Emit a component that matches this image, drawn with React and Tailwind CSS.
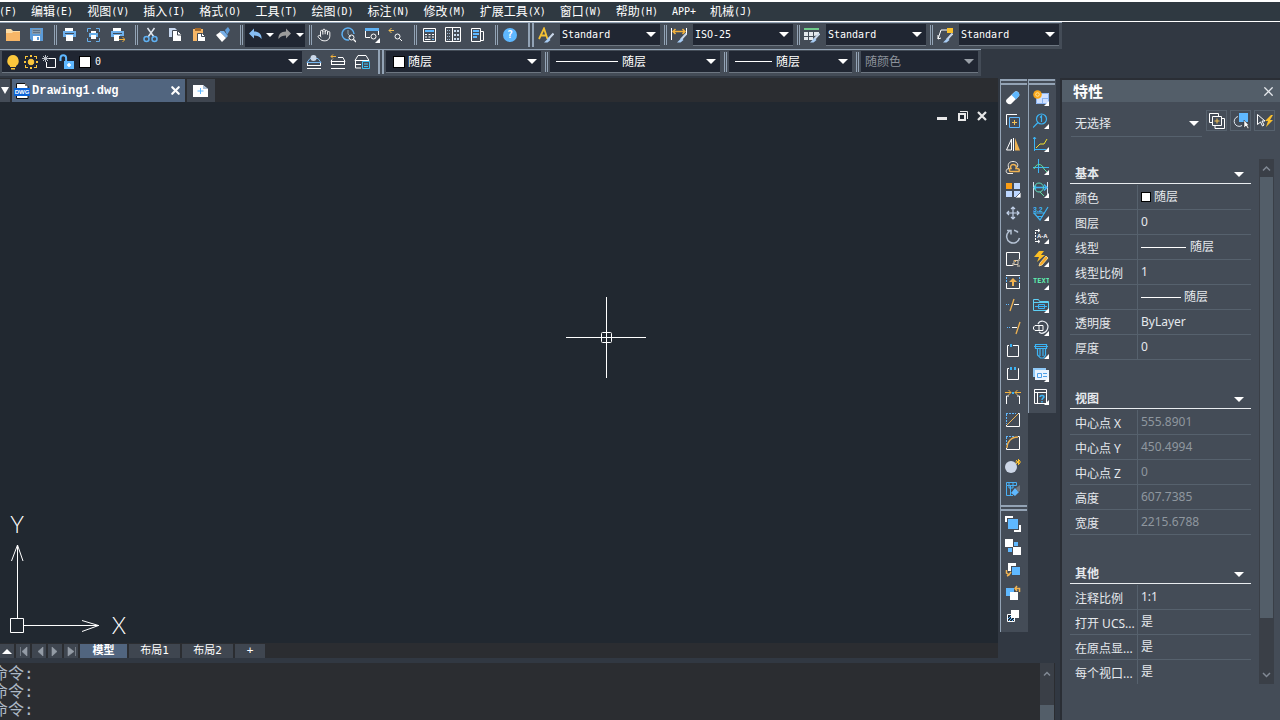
import React from 'react'
import { Hand, X } from 'lucide-react'

const Icon = ({ children }) => (
  <svg width="16" height="16" viewBox="0 0 16 16" fill="none" className="shrink-0">{children}</svg>
)

const Flyout = () => <path d="M16 11v5h-5z" fill="#fff" />

const Lens = () => (
  <>
    <circle cx="10.5" cy="10.5" r="2.5" stroke="#fff" />
    <path d="M12.5 12.5L15 15" stroke="#fff" strokeWidth="1.3" />
  </>
)

const Pen = () => (
  <>
    <path d="M15.500 6.500L10 12.500" stroke="#c9d6e8" strokeWidth="2" />
    <path d="M10.500 11l2 2-3 2.500H6z" fill="#a9cdf5" />
  </>
)

const Caret = ({ dim }) => (
  <svg width="10" height="5" viewBox="0 0 10 5" className="shrink-0 pointer-events-none">
    <path d="M0 0h10L5 5z" fill={dim ? '#9aa0a8' : '#fff'} />
  </svg>
)

const icons = {
  open: (
    <>
      <path d="M2 2h5l2 2h7v10H2z" fill="#fcdca6" />
      <path d="M2 6h6l1-1h7v9H2z" fill="#f7b667" />
    </>
  ),
  save: (
    <>
      <path d="M2 1h13v13H4l-2-2z" fill="#5c9bd8" />
      <path d="M4 2h9v5H4z" fill="#8499ab" />
      <path d="M5 3.500h7M5 5.500h7" stroke="#5d7287" />
      <path d="M5 9h7v5H5z" fill="#fff" />
      <path d="M9 10h2v3H9z" fill="#5c9bd8" />
    </>
  ),
  print: (
    <>
      <path d="M4 1h8v4H4z" fill="#fff" />
      <path d="M2 4h13v6H2z" fill="#6eb0ec" />
      <path d="M4 6.500h9" stroke="#3f4a58" />
      <path d="M5 8h7v6H5z" fill="#fff" />
    </>
  ),
  preview: (
    <>
      <path d="M2.500 5V1.500H6M11 1.500h3.500V5M14.500 11v3.500H11M6 14.500H2.500V11" stroke="#67aeea" />
      <path d="M6 4h5v2H6z" fill="#fff" />
      <path d="M4 6h9v4H4z" fill="#67aeea" />
      <path d="M6 8h5v4H6z" fill="#fff" />
    </>
  ),
  plot: (
    <>
      <path d="M4 1h8v4H4z" fill="#fff" />
      <path d="M2 4h13v6H2z" fill="#6eb0ec" />
      <path d="M4 6.500h9" stroke="#3f4a58" />
      <path d="M5 8h6v6H5z" fill="#fff" />
      <path d="M10 9h6v6h-6z" fill="#424a55" />
      <path d="M10 12.500h6M13.500 10l2.500 2.500-2.500 2.500" stroke="#f3b23d" />
    </>
  ),
  cut: (
    <>
      <path d="M5.500 1L12 10M12.500 1L6 10" stroke="#dfe6ee" strokeWidth="1.500" />
      <circle cx="4.500" cy="12" r="2.500" stroke="#5fb1f3" strokeWidth="1.500" />
      <circle cx="12.500" cy="12" r="2.500" stroke="#5fb1f3" strokeWidth="1.500" />
    </>
  ),
  copy: (
    <>
      <path d="M3 1h6l2 2v7H3z" fill="#c7d7ef" />
      <path d="M6.500 3.500h5l4 4v7h-9z" fill="#fff" stroke="#424a55" />
      <path d="M11.500 4v4h4" stroke="#424a55" />
    </>
  ),
  paste: (
    <>
      <path d="M3 2h10v12H3z" fill="#f6b666" />
      <path d="M5 1h6v3H5z" fill="#a56a2c" />
      <path d="M7.500 6.500h5l3 3v5h-8z" fill="#fff" stroke="#424a55" />
      <path d="M11.500 6v3.500H15" stroke="#424a55" />
    </>
  ),
  brush: (
    <>
      <path d="M11 3l3-3 2 3-3 5z" fill="#5e9cd9" />
      <path d="M6 4h4l4 5-2 2-6-6z" fill="#78b0e8" />
      <path d="M2 8l4-3 6 6-4 4z" fill="#fff" />
    </>
  ),
  undo: <path d="M2 6.500l5-5v3c5 0 8 3 7.500 7.500C12.500 9 10 8.500 7 8.500v3z" fill="#86bdf3" />,
  redo: <path d="M14 6.500l-5-5v3c-5 0-8 3-7.500 7.500C3.500 9 6 8.500 9 8.500v3z" fill="#9b9b9b" />,
  pan: <Hand x="1" y="1" width="14" height="14" color="#fff" strokeWidth={1.600} />,
  zoomRealtime: (
    <>
      <path d="M9 13A6 6 0 1 1 14 7" stroke="#5fb1f3" strokeWidth="1.500" />
      <path d="M8 3v4l3 3" stroke="#8fa4b0" />
      <circle cx="11.500" cy="10.500" r="2.500" stroke="#fff" />
      <path d="M13.500 12.500L16 15" stroke="#fff" strokeWidth="1.300" />
    </>
  ),
  zoomWindow: (
    <>
      <path d="M1 2.500h14" stroke="#5fb1f3" strokeWidth="3" />
      <path d="M1.500 4v6.500H6M14.500 4v4" stroke="#fff" />
      <circle cx="9.500" cy="9.500" r="2.500" stroke="#fff" />
      <Flyout />
    </>
  ),
  zoomPrev: (
    <>
      <path d="M1 3.500h5M3.500 1L1 3.500 3.500 6" stroke="#f3c155" />
      <circle cx="9.500" cy="9.500" r="2.500" stroke="#fff" />
      <path d="M11.500 11.500L14 14" stroke="#fff" />
    </>
  ),
  calc: (
    <>
      <path d="M2.500 1.500h12v13h-12z" stroke="#fff" />
      <path d="M4 4h9" stroke="#5fb8ff" strokeWidth="2" />
      <path d="M4 7.500h2m1.500 0h2m1.500 0h2M4 10h2m1.500 0h2m1.500 0h2M4 12.500h5.500" stroke="#fff" />
      <path d="M11 12.500h2" stroke="#5fb8ff" />
    </>
  ),
  designCenter: (
    <>
      <path d="M.5.5h15v14H.5zM7.500.5v14" stroke="#fff" />
      <path d="M2 3.500h4M2 6.500h4M2 9.500h4M2 12.500h4" stroke="#9db8cf" strokeDasharray="1 1" />
      <path d="M9 3h2v2H9zm3 0h2v2h-2zM9 7h2v2H9zm3 0h2v2h-2zM9 11h2v2H9zm3 0h2v2h-2z" fill="#c8dbef" />
    </>
  ),
  palette: (
    <>
      <path d="M2.500 1.500h9v13h-9zM11.500 4.500h3v9h-3" stroke="#fff" />
      <path d="M4 4h6M4 7h6M4 10h4" stroke="#5fb8ff" strokeWidth="2" />
    </>
  ),
  textStyle: (
    <>
      <path d="M1 12L6 1.500 9.500 12M3 8.500h5.500" stroke="#f5c033" strokeWidth="1.800" />
      <Pen />
    </>
  ),
  dimStyle: (
    <>
      <path d="M.5 1v12M15.500 1v7" stroke="#fff" />
      <path d="M2 4.500h12M4.500 2L2 4.500 4.500 7M11.500 2L14 4.500 11.500 7" stroke="#f3b23d" strokeWidth="1.500" />
      <Pen />
    </>
  ),
  tableStyle: (
    <>
      <path d="M0 1h15v2H0z" fill="#6fca8a" />
      <path d="M0 5h4v4H0zm5 0h4v4H5zm5 0h5v3l-5 1zM0 10h4v3H0zm5 0h4v3H5z" fill="#e3e7ec" />
      <Pen />
    </>
  ),
  leaderStyle: (
    <>
      <path d="M1 12L4 3h6M1 8v4l3-1" stroke="#fff" />
      <path d="M10 1h6v5h-6z" fill="#f8bf2c" />
      <Pen />
    </>
  ),
  bulb: <path d="M8 1a6 6 0 0 1 3 11v1H5v-1A6 6 0 0 1 8 1zM6 14h4v1.500H6z" fill="#fbc73c" />,
  sun: (
    <>
      <circle cx="8" cy="8" r="2.800" fill="#fbc73c" stroke="#fbc73c" />
      <path d="M2 2h3v1H3v2H2zM11 2h3v3h-1V3h-2zM2 11h1v2h2v1H2zM13 11h1v3h-3v-1h2zM7 1h2v2H7zm0 12h2v2H7zM1 7h2v2H1zm12 0h2v2h-2z" fill="#fbc73c" />
    </>
  ),
  freeze: (
    <>
      <path d="M8 4.500h6.500v9h-9V8" stroke="#fff" />
      <path d="M4.500 1v7M1 4.500h7M2 2l5 5M7 2L2 7" stroke="#b9bec5" />
    </>
  ),
  unlock: (
    <>
      <path d="M1.500 7V4a2.800 2.800 0 0 1 5.600 0v5" stroke="#5fb8ff" strokeWidth="2" />
      <path d="M5 7h10v8H5z" fill="#5fb8ff" />
      <path d="M10 9v4M8 11h4" stroke="#fff" strokeWidth="1.500" />
    </>
  ),
  layerManager: (
    <>
      <path d="M4 4.500L1 8.500h14l-3-4z" stroke="#78b8f0" />
      <path d="M1 11.500h14M1 14.500h14M1.500 9v3M14.500 9v3" stroke="#fff" />
      <circle cx="7.500" cy="4" r="3" fill="#ccd8e8" />
    </>
  ),
  layerPrev: (
    <>
      <path d="M8 3.500h5l2 4H1l1-2M1 10.500h14M1 14.500h14M14.500 8v3M1.500 8v3" stroke="#fff" />
      <path d="M1 2.500h5M3 .5L1 2.500l2 2" stroke="#f3b23d" />
    </>
  ),
  layerState: (
    <>
      <path d="M4 1.500h8l3 5H1zM1.500 7v7H7M1 10.500h6" stroke="#fff" />
      <path d="M8.500 7.500h7v7h-7zM10 10h4M10 12.500h4" stroke="#3ec1f5" />
    </>
  ),
  dwg: (
    <>
      <path d="M2.500.5H11l3 3v12H2.500z" fill="#fff" stroke="#111" />
      <path d="M11 0v3h3" fill="#777" />
      <path d="M0 5h16v8H0z" fill="#0b63d6" />
    </>
  ),
  newTab: (
    <>
      <path d="M1 2h10l5 4v8H1z" fill="#fff" />
      <path d="M11 2v4h5" fill="#a8bed6" />
      <path d="M8.500 5v6M5.500 8h6" stroke="#5fb8ff" />
    </>
  ),
  erase: (
    <>
      <path d="M2 9L9.500 2Q11 .5 13 2q2 2 1 4l-8 8q-2 1-4-1t0-4z" fill="#fff" />
      <path d="M6.500 5L9.500 2Q11 .5 13 2q2 2 1 4l-3 3.500z" fill="#5fb8ff" />
    </>
  ),
  offsetCopy: (
    <>
      <path d="M1.500 12V1.500H12" stroke="#fff" />
      <path d="M4.500 4.500h10v10h-10z" stroke="#5fb8ff" />
      <path d="M9.500 7v5M7 9.500h5" stroke="#f3c155" />
    </>
  ),
  mirror: (
    <>
      <path d="M6.500 3v11h-5z" stroke="#fff" />
      <path d="M8.500 2v13" stroke="#fff" />
      <path d="M10 2l5 12.500h-5z" fill="#f0b352" />
    </>
  ),
  offset: (
    <>
      <path d="M8 14.500H3c-3-1-2-5 1-5-2-4 0-7 4-7s6 3 4 6" stroke="#f1ece4" />
      <path d="M5 12.500h9c1-3-1-3-3-3 1-3-1-4-3-4s-3 2-2 4c-2 0-2 1-1 3z" stroke="#f0b352" strokeWidth="1.500" />
    </>
  ),
  array: (
    <>
      <path d="M1 1h6v6H1z" fill="#f99d16" />
      <path d="M9 1h6v6H9zM1 9h6v6H1zM9 9h6v6H9z" fill="#bdd7ff" />
      <path d="M16 10v6h-6z" fill="#fff" stroke="#424a55" strokeWidth=".8" />
    </>
  ),
  move: <path d="M8 2v12M2 8h12M6 4l2-2 2 2M6 12l2 2 2-2M4 6L2 8l2 2M12 6l2 2-2 2" stroke="#c3d2ea" strokeWidth="1.200" />,
  rotate: (
    <path d="M5 2.500L3.500 4a6.500 6.500 0 1 0 11 6M2 2.500h4v4M9 2.200a6.500 6.500 0 0 1 4 2.300" stroke="#b5c2d4" strokeWidth="1.500" />
  ),
  scale: (
    <>
      <path d="M14.500 8V1.500h-13v13H8" stroke="#fff" />
      <path d="M9 9.500h4v4H9zM14 8v2M8 12v3M12 15h3" stroke="#d8cdbb" />
      <path d="M9 9l2 2" stroke="#f0b352" />
    </>
  ),
  stretch: (
    <>
      <path d="M1.500 9v5.500h13V9M1 1.500h14" stroke="#fff" />
      <path d="M1.500 3v5M14.500 3v5" stroke="#5fb8ff" strokeDasharray="2 1" />
      <path d="M8 4l4 4H9v4H7V8H4z" fill="#f0b352" />
    </>
  ),
  trim: (
    <>
      <path d="M5 14L9 2" stroke="#f0b352" strokeWidth="1.300" />
      <path d="M9 7.500h5" stroke="#fff" />
      <path d="M1 7.500h4" stroke="#5fb8ff" strokeDasharray="1 1" />
    </>
  ),
  extend: (
    <>
      <path d="M11 14l4-12" stroke="#f0b352" strokeWidth="1.300" />
      <path d="M7 7.500h5" stroke="#fff" />
      <path d="M2 7.500h4" stroke="#5fb8ff" strokeDasharray="1 1" />
    </>
  ),
  breakPoint: (
    <>
      <path d="M4 2.500H2.500v11h11v-11H8" stroke="#fff" />
      <path d="M5 1h2v3H5z" fill="#3cb4f5" />
    </>
  ),
  breakAt: (
    <>
      <path d="M4 2.500H2.500v11h11v-11H13" stroke="#fff" />
      <path d="M5 1h2v3H5zM9 1h2v3H9z" fill="#3cb4f5" />
    </>
  ),
  join: (
    <>
      <path d="M1.500 15V7H4M14.500 15V7H12" stroke="#fff" />
      <path d="M0 3.500h6M3.500 1L6 3.500 3.500 6M16 3.500h-6M12.500 1L10 3.500 12.500 6" stroke="#f3b23d" />
      <path d="M7 3h2v2H7z" fill="#3cb4f5" />
    </>
  ),
  chamfer: (
    <>
      <path d="M1.500 13v1.500h13v-13H13" stroke="#fff" />
      <path d="M1 1.500h10M1.500 2v10" stroke="#5fb8ff" strokeDasharray="2 1" />
      <path d="M2 13L13 2" stroke="#f0b352" />
    </>
  ),
  fillet: (
    <>
      <path d="M1.500 13v1.500h13v-13H13" stroke="#fff" />
      <path d="M1 1.500h8M1.500 2v8" stroke="#5fb8ff" strokeDasharray="2 1" />
      <path d="M2 13C2 7 6 2 13 2" stroke="#f0b352" strokeWidth="1.300" />
    </>
  ),
  blend: (
    <>
      <circle cx="6" cy="9" r="6" fill="#ccd6e6" />
      <path d="M13.500 1v6M10.500 4h6M11 2l4 4M15 2l-4 4" stroke="#fbc02d" />
    </>
  ),
  explode: (
    <>
      <path d="M1.500 1.500h10v3h-10zM1.500 4.500v10h4v-10M4 2v5h4V2M5 14.500h3" stroke="#49b0f5" />
      <path d="M10 7l4 4-4 4-4-3z" fill="#5fb8ff" />
      <path d="M11 7l4-3v6l-2 1z" fill="#73787f" />
    </>
  ),
  bringFront: (
    <>
      <path d="M1 6V1h7M15 9v6H9" stroke="#fff" strokeWidth="2" />
      <path d="M3 3h10v10H3z" fill="#5fb8ff" />
    </>
  ),
  sendBack: (
    <>
      <path d="M0 0h8v8H0zM8 8h8v8H8z" fill="#fff" />
      <path d="M9 3h4v4H9zM3 9h4v4H3z" fill="#5fb8ff" />
    </>
  ),
  above: (
    <>
      <path d="M3 1h8v8H3z" fill="#fff" />
      <path d="M6 4h10v10H6z" fill="#424a55" />
      <path d="M7 5h8v8H7z" fill="#5fb8ff" />
      <path d="M1.500 8v3l3 2M6 10l-2 3-2 1" stroke="#f0b352" strokeWidth="1.500" />
    </>
  ),
  under: (
    <>
      <path d="M1 3h8v8H1z" fill="#5fb8ff" />
      <path d="M5 7h8v8H5z" fill="#fff" />
      <path d="M14.500 7V3.500H10M12 1l-2 2.500L12 6" stroke="#f0b352" strokeWidth="1.500" />
    </>
  ),
  hatchBack: (
    <>
      <path d="M2.500 6.500h7v7h-7z" fill="#1f2630" stroke="#fff" />
      <path d="M3 11l4-4M4 13l5-5M7 13l2-2" stroke="#5fb8ff" />
      <path d="M6 2h8v8H6z" fill="#fff" />
    </>
  ),
  insertView: (
    <>
      <path d="M3 3h13v11H3z" fill="#cfe0ff" />
      <path d="M3.500 3.500h12v10h-12z" stroke="#8ab4f2" />
      <path d="M9 8.500h6M9.500 8v5" stroke="#8ab4f2" />
      <circle cx="4.500" cy="4.500" r="4.300" fill="#f9a61b" />
      <circle cx="4.500" cy="4.500" r="1.800" stroke="#ffe59a" />
      <Flyout />
    </>
  ),
  balloon: (
    <>
      <circle cx="8.500" cy="6" r="5" stroke="#3cb4f5" strokeWidth="1.200" />
      <path d="M5 9.500L0 14.500M7 4.500L8.500 3v6" stroke="#3cb4f5" strokeWidth="1.200" />
      <Flyout />
    </>
  ),
  graph: (
    <>
      <path d="M1.500 1v14M1 13.500h12M0 3l1.500-2L3 3" stroke="#3cb4f5" />
      <path d="M3 12l4-4h4l3-5" stroke="#f3e12d" />
      <Flyout />
    </>
  ),
  centerLine: (
    <>
      <path d="M5.500 0v14M0 8.500h16" stroke="#3cb4f5" />
      <path d="M1 10c2-6 8-6 10 0l3 3" stroke="#5fe0a0" />
      <Flyout />
    </>
  ),
  dimension: (
    <>
      <path d="M.5 0v16M14.500 0v14" stroke="#d6e2ee" />
      <path d="M1 5.500h13M3 3.500l-2 2 2 2M11 2.500l3 3-3 3" stroke="#3cb4f5" strokeWidth="1.300" />
      <circle cx="6" cy="5.500" r="4.500" stroke="#5fe0c0" />
      <path d="M7 10l4 4" stroke="#5fe0a0" />
      <Flyout />
    </>
  ),
  roughness: (
    <>
      <path d="M0 8h12M1 8l6 7 8-13M4 11.500h6" stroke="#3cb4f5" strokeWidth="1.200" />
      <text x="0" y="6.500" fontSize="7" fontWeight="bold" fill="#3cb4f5" fontFamily="Liberation Sans">3.2</text>
      <Flyout />
    </>
  ),
  section: (
    <>
      <path d="M2.500 4v9" stroke="#fff" strokeDasharray="2 1" />
      <path d="M2 2.500h4M2 13.500h4M5 1l2 1.500L5 4M5 12l2 1.500L5 15" stroke="#fff" />
      <text x="4" y="10" fontSize="6" fontWeight="bold" fill="#fff" fontFamily="Liberation Sans">A-A</text>
      <Flyout />
    </>
  ),
  power: (
    <>
      <path d="M6 0h5L8 4h4l-8 7 2-5H1z" fill="#fbbf24" />
      <path d="M13 5l2 2-6 7-3 1 1-3z" fill="#f6a821" stroke="#ffe3a0" strokeWidth=".8" />
      <Flyout />
    </>
  ),
  text: (
    <>
      <text x="0" y="9" fontSize="7" fontWeight="bold" fill="#5ff0b0" fontFamily="DejaVu Sans Mono">TEXT</text>
      <Flyout />
    </>
  ),
  library: (
    <>
      <path d="M.5 13.500v-11h5l1 2h9v9z" stroke="#5fd0f5" />
      <path d="M1 5.500h14" stroke="#5fd0f5" />
      <path d="M2 9.500h12M5.500 7.500h6v4h-6z" stroke="#3cb4f5" />
      <Flyout />
    </>
  ),
  bolt: (
    <>
      <path d="M2 5.500h8v5H2L.5 9V7zM6 5.500v5" stroke="#fff" />
      <path d="M5 4c2-4 8-4 10 2 0 6-6 9-9 6" stroke="#e9edf2" strokeWidth="1.200" />
      <Flyout />
    </>
  ),
  screw: (
    <>
      <path d="M2.500 1.500h11v4h-11zM4.500 6v6l3 3h3l2-3V6M7 6v7M10 6v7M1 3.500h14" stroke="#3cb4f5" strokeWidth="1.200" />
      <Flyout />
    </>
  ),
  cards: (
    <>
      <path d="M0 2h13v9H0z" fill="#8fc9f7" />
      <path d="M2 4h14v10H2z" fill="#e8f3ff" />
      <path d="M4.500 7.500h4v4h-4zM10 7.500h4M10 10.500h4" stroke="#4c9fe8" />
      <Flyout />
    </>
  ),
  help: (
    <>
      <path d="M1.500.5h12v14h-12zM1.500 3.500h12M4.500 3.500v11" stroke="#fff" />
      <path d="M7 8c0-2 4-2 4 0 0 1-2 1-2 3M9 12v1.500" stroke="#3cb4f5" strokeWidth="1.500" />
      <Flyout />
    </>
  ),
  pickAdd: (
    <>
      <path d="M3 9.500H.5v-9h9V3M13 5.500h2.500v10H6V13" stroke="#fff" />
      <path d="M3.500 3.500h9v9h-9z" stroke="#fff" />
      <path d="M8 5.500v5M5.500 8h5" stroke="#f3c155" />
    </>
  ),
  selectObjects: (
    <>
      <path d="M5 3.500a5 5 0 1 0 4 9" stroke="#dfe6ee" />
      <path d="M6 0h9v9H6z" fill="#5fb8ff" />
      <path d="M11 7v8l2-2 2 3 1-1-1.500-2.500H16z" fill="#fff" stroke="#222" strokeWidth=".5" />
    </>
  ),
  quickSelect: (
    <>
      <path d="M.5 1.500v10l3-2.500 2 4 1.500-1-2-4H8z" stroke="#fff" />
      <path d="M14 2L8 8h3l-2 6 7-7h-3l3-5z" fill="#fbc02d" />
    </>
  ),
}

const menus = [
  ['', '(F)'], ['编辑', '(E)'], ['视图', '(V)'], ['插入', '(I)'], ['格式', '(O)'], ['工具', '(T)'],
  ['绘图', '(D)'], ['标注', '(N)'], ['修改', '(M)'], ['扩展工具', '(X)'], ['窗口', '(W)'], ['帮助', '(H)'],
  ['', 'APP+'], ['机械', '(J)'],
]

const modifyTools = ['erase', 'offsetCopy', 'mirror', 'offset', 'array', 'move', 'rotate', 'scale', 'stretch', 'trim', 'extend',
  'breakPoint', 'breakAt', 'join', 'chamfer', 'fillet', 'blend', 'explode']
const orderTools = ['bringFront', 'sendBack', 'above', 'under', 'hatchBack']
const mechTools = ['insertView', 'balloon', 'graph', 'centerLine', 'dimension', 'roughness', 'section', 'power', 'text',
  'library', 'bolt', 'screw', 'cards', 'help']

const ToolButton = ({ name }) => (
  <button aria-label={name} className="w-6 h-[23px] shrink-0 flex items-center justify-center hover:bg-[#56606c]">
    <Icon>{icons[name]}</Icon>
  </button>
)

const Sep = ({ tight }) => (
  <div className={`${tight ? 'ml-1' : 'ml-1.5'} w-[3px] h-5 shrink-0 border-x border-[#93a3b5]`}></div>
)

const HeavySep = ({ tight }) => (
  <div className={`${tight ? 'ml-1' : 'ml-1.5'} w-1.5 h-6 shrink-0 border-x-2 border-[#93a3b5]`}></div>
)

const Combo = ({ label, value, width, children, mono, disabled, pad = 'pl-0.5' }) => (
  <div className={`${width} ${pad} ml-0.5 pr-1 h-[22px] shrink-0 flex items-center bg-[#202632] border-b border-[#6d7681]`}>
    {children}
    <select
      aria-label={label}
      disabled={disabled}
      className={`flex-1 min-w-0 appearance-none bg-transparent outline-none ${mono ? 'text-[10px]' : 'text-xs'} ${disabled ? 'text-[#8d939c]' : 'text-white'}`}
    >
      <option>{value}</option>
    </select>
    <Caret dim={disabled} />
  </div>
)

const ToolColumn = ({ tools }) => (
  <div className="w-7 pb-[5px] bg-[#444c57] border-l border-[#93a3b5]">
    <div className="h-1.5 mr-px border-y-2 border-[#93a3b5]"></div>
    <div className="pt-px flex flex-col">
      {tools.map(t => <ToolButton key={t} name={t} />)}
    </div>
  </div>
)

const sections = [
  {
    title: '基本',
    rows: [
      ['颜色', '随层', 'swatch'], ['图层', '0'], ['线型', '随层', 'line'], ['线型比例', '1'],
      ['线宽', '随层', 'shortLine'], ['透明度', 'ByLayer'], ['厚度', '0'],
    ],
  },
  {
    title: '视图',
    readOnly: true,
    rows: [['中心点 X', '555.8901'], ['中心点 Y', '450.4994'], ['中心点 Z', '0'], ['高度', '607.7385'], ['宽度', '2215.6788']],
  },
  {
    title: '其他',
    rows: [['注释比例', '1:1'], ['打开 UCS...', '是'], ['在原点显...', '是'], ['每个视口...', '是']],
  },
]

const Section = ({ title, rows, readOnly }) => (
  <section className="mb-6">
    <button className="w-full h-[25px] pt-1.5 pl-[5px] pr-[7px] flex items-center justify-between border-b border-[#e9ecef] font-bold">
      {title}
      <Caret />
    </button>
    <table className="w-full mt-px table-fixed border-separate border-spacing-0 leading-4">
      <tbody>
        {rows.map(([name, value, mark]) => (
          <tr key={name} className="h-[25px]">
            <th className="w-[68px] p-0 pt-1 pl-[5px] text-left font-normal whitespace-nowrap border-b border-r border-[#56616d]">{name}</th>
            <td className={`p-0 pl-[3px] border-b border-[#56616d] ${readOnly ? 'text-[#8f979f]' : ''}`}>
              <div className="flex items-center">
                {mark === 'swatch' && <span className="w-2.5 h-2.5 mr-[3px] bg-white border border-black"></span>}
                {mark === 'line' && <span className="w-[45px] h-px mr-1 bg-white"></span>}
                {mark === 'shortLine' && <span className="w-10 h-px mr-[3px] bg-white"></span>}
                {value}
              </div>
            </td>
          </tr>
        ))}
      </tbody>
    </table>
  </section>
)

const Toolbars = () => (
  <div className="flex flex-col items-start">
    <div className="h-[27px] pb-0.5 pr-[3px] flex items-center bg-[#444c57] border-t border-[#93a3b5]">
      <ToolButton name="open" />
      <ToolButton name="save" />
      <Sep />
      <ToolButton name="print" />
      <ToolButton name="preview" />
      <ToolButton name="plot" />
      <Sep />
      <ToolButton name="cut" />
      <ToolButton name="copy" />
      <ToolButton name="paste" />
      <ToolButton name="brush" />
      <Sep />
      <div className="ml-0.5 w-[60px] h-[23px] flex items-center justify-around bg-[#202632]">
        <button aria-label="undo"><Icon>{icons.undo}</Icon></button>
        <svg width="8" height="4" viewBox="0 0 8 4"><path d="M0 0h8L4 4z" fill="#fff" /></svg>
        <button aria-label="redo"><Icon>{icons.redo}</Icon></button>
        <svg width="8" height="4" viewBox="0 0 8 4"><path d="M0 0h8L4 4z" fill="#fff" /></svg>
      </div>
      <Sep tight />
      <ToolButton name="pan" />
      <ToolButton name="zoomRealtime" />
      <ToolButton name="zoomWindow" />
      <ToolButton name="zoomPrev" />
      <Sep />
      <ToolButton name="calc" />
      <ToolButton name="designCenter" />
      <ToolButton name="palette" />
      <Sep />
      <button aria-label="about" className="w-6 flex justify-center">
        <span className="w-3.5 h-3.5 rounded-full bg-[#5fb8ff] text-white text-[10px] leading-[14px] font-bold">?</span>
      </button>
      <HeavySep />
      <ToolButton name="textStyle" />
      <Combo label="文字样式" value="Standard" width="w-[100px]" mono />
      <Sep tight />
      <ToolButton name="dimStyle" />
      <Combo label="标注样式" value="ISO-25" width="w-[100px]" mono />
      <Sep tight />
      <ToolButton name="tableStyle" />
      <Combo label="表格样式" value="Standard" width="w-[100px]" mono />
      <Sep tight />
      <ToolButton name="leaderStyle" />
      <Combo label="引线样式" value="Standard" width="w-[100px]" mono />
    </div>
    <div className="h-[27px] pb-0.5 pr-[3px] flex items-center bg-[#444c57] border-t border-[#93a3b5]">
      <Combo label="图层" value="0" width="w-[300px]" pad="pl-[3px]" mono>
        <div className="mr-1 flex items-center gap-0.5">
          <Icon>{icons.bulb}</Icon>
          <Icon>{icons.sun}</Icon>
          <Icon>{icons.freeze}</Icon>
          <Icon>{icons.unlock}</Icon>
          <span className="w-3 h-3 ml-0.5 bg-white border border-black"></span>
        </div>
      </Combo>
      <ToolButton name="layerManager" />
      <ToolButton name="layerPrev" />
      <ToolButton name="layerState" />
      <HeavySep tight />
      <Combo label="颜色" value="随层" width="w-[155px]" pad="pl-[7px]">
        <span className="w-3 h-3 mr-[3px] bg-white border border-black"></span>
      </Combo>
      <Sep tight />
      <Combo label="线型" value="随层" width="w-[170px]" pad="pl-1.5">
        <span className="w-[62px] h-px mr-1 bg-white"></span>
      </Combo>
      <Sep tight />
      <Combo label="线宽" value="随层" width="w-[123px]" pad="pl-1.5">
        <span className="w-[37px] h-px mr-1 bg-white"></span>
      </Combo>
      <Sep tight />
      <Combo label="打印样式" value="随颜色" width="w-[117px]" pad="pl-1" disabled />
    </div>
  </div>
)

const Canvas = () => (
  <div className="relative flex-1 min-h-0 overflow-hidden bg-[#212830]">
    <div className="pt-2 pr-2.5 flex justify-end gap-2">
      <button aria-label="最小化" className="w-3 h-3">
        <svg width="12" height="12" viewBox="0 0 12 12"><path d="M1 7h10v3H1z" fill="#e8e8e8" /></svg>
      </button>
      <button aria-label="还原" className="w-3 h-3">
        <svg width="12" height="12" viewBox="0 0 12 12" fill="none">
          <path d="M4 1.500h7.500V9" stroke="#e8e8e8" />
          <path d="M3 4h6v6H3z" stroke="#e8e8e8" strokeWidth="2" />
        </svg>
      </button>
      <button aria-label="关闭" className="w-3 h-3">
        <svg width="12" height="12" viewBox="0 0 12 12"><path d="M2 2l8 8M10 2l-8 8" stroke="#e8e8e8" strokeWidth="2.200" /></svg>
      </button>
    </div>

    {/* crosshair cursor */}
    <svg width="81" height="81" viewBox="0 0 81 81" fill="none" className="absolute left-[566px] top-[195px]">
      <path d="M40.500 0v81M0 40.500h80" stroke="#fff" />
      <rect x="35.500" y="35.500" width="10" height="10" rx="1" stroke="#fff" />
    </svg>

    {/* ucs axes */}
    <svg width="140" height="150" viewBox="0 -20 140 150" fill="none" className="absolute left-0 bottom-0">
      <path d="M10.500 105.500h13v14h-13zM17.500 105V32M24 112.500h75" stroke="#fff" />
      <path d="M11.500 48l6-16 5.500 16M82 107.500l16.500 5-16.500 6" stroke="#fff" />
      <text x="17" y="20" fontSize="23" fontWeight="300" textAnchor="middle" fill="#fff" fontFamily="Lato, sans-serif">Y</text>
      <text x="119" y="121" fontSize="23" fontWeight="300" textAnchor="middle" fill="#fff" fontFamily="Lato, sans-serif">X</text>
    </svg>
  </div>
)

const navButtons = [
  ['首页', 'M4.500 2v9M11 2L6 6.500 11 11z'],
  ['上一页', 'M11 2L6 6.500 11 11z'],
  ['下一页', 'M4 2l5 4.500L4 11z'],
  ['末页', 'M11.500 2v9M4 2l6 4.500L4 11z'],
]

const LayoutTabs = () => (
  <div className="h-[15px] pt-px flex gap-0.5 bg-[#2b2d31] text-[11px] leading-3 text-white">
    <button aria-label="展开" className="w-3.5 bg-[#3f4650] flex items-center justify-center">
      <svg width="10" height="5" viewBox="0 0 10 5"><path d="M0 5h10L5 0z" fill="#fff" /></svg>
    </button>
    {navButtons.map(([name, d]) => (
      <button key={name} aria-label={name} className="w-3.5 bg-[#3f4650]">
        <svg width="14" height="13" viewBox="0 0 14 13"><path d={d} fill="#949ca6" stroke="#949ca6" strokeWidth=".6" /></svg>
      </button>
    ))}
    <button className="w-[47px] bg-[#51657f] font-bold">模型</button>
    <button className="w-[51px] bg-[#3f4650]">布局1</button>
    <button className="w-[51px] bg-[#3f4650]">布局2</button>
    <button className="w-[30px] bg-[#3f4650]">+</button>
  </div>
)

const Properties = () => (
  <aside className="w-[220px] shrink-0 flex flex-col bg-[#444c57] border-l-2 border-t-2 border-[#2a2e35] text-xs text-[#e6e9ed] font-['Noto_Sans','Noto_Sans_CJK_SC',sans-serif]">
    <div className="h-[22px] pl-[11px] pr-1 flex items-center justify-between bg-[#535e69]">
      <h2 className="text-[15px] font-bold text-white">特性</h2>
      <button aria-label="关闭特性"><X size={15} strokeWidth={2} /></button>
    </div>
    <div className="pt-2 pl-[9px] pr-[5px] flex gap-1">
      <div className="flex-1 h-[27px] pt-px pl-1 pr-[3px] flex items-center border-b border-[#56616d]">
        <select aria-label="选择对象" className="flex-1 min-w-0 appearance-none bg-transparent outline-none">
          <option>无选择</option>
        </select>
        <Caret />
      </div>
      <div className="flex gap-[3px]">
        {['pickAdd', 'selectObjects', 'quickSelect'].map(n => (
          <button key={n} aria-label={n} className="w-[21px] h-[21px] flex items-center justify-center border border-[#56616d]">
            <Icon>{icons[n]}</Icon>
          </button>
        ))}
      </div>
    </div>
    <div className="mt-[22px] mb-9 pl-2 pr-1.5 flex-1 min-h-0 flex gap-2">
      <div className="flex-1 min-w-0 overflow-hidden">
        {sections.map(s => <Section key={s.title} {...s} />)}
      </div>
      <div className="w-[15px] flex flex-col bg-[#3a3f47]">
        <svg width="15" height="18" viewBox="0 0 15 18" fill="none"><path d="M4 11.500L7.500 8l3.500 3.500" stroke="#818994" strokeWidth="1.500" /></svg>
        <div className="mx-px flex-[441] bg-[#535e69]"></div>
        <div className="flex-[48]"></div>
        <svg width="15" height="18" viewBox="0 0 15 18" fill="none"><path d="M4 7l3.500 3.500L11 7" stroke="#818994" strokeWidth="1.500" /></svg>
      </div>
    </div>
  </aside>
)

const App = () => {
  return (
    <div className="h-screen flex flex-col overflow-hidden bg-[#313842] text-xs text-white font-['DejaVu_Sans_Mono','Noto_Sans_CJK_SC',monospace]">
      <nav className="h-[22px] shrink-0 -ml-px flex items-center gap-3.5 bg-[#2f3941] border-t-2 border-b border-white">
        {menus.map(([label, key]) => (
          <button key={key} className="flex items-center leading-4 whitespace-nowrap">
            {label}<span className="text-[10px]">{key}</span>
          </button>
        ))}
      </nav>
      <Toolbars />
      <div className="mt-0.5 flex-1 min-h-0 flex">
        <div className="flex-1 min-w-0 flex flex-col">
          <div className="flex-1 min-h-0 flex">
            <main className="flex-1 min-w-0 flex flex-col">
              <div className="h-6 pt-px shrink-0 flex gap-0.5 bg-[#2b2d31]">
                <button aria-label="标签列表" className="w-2.5 bg-[#444c57] flex items-center justify-center">
                  <svg width="8" height="7" viewBox="0 0 8 7"><path d="M0 0h8L4 7z" fill="#fff" /></svg>
                </button>
                <div className="w-[173px] pl-0.5 pr-[3px] flex items-center bg-[#51657f]">
                  <span className="relative">
                    <Icon>{icons.dwg}</Icon>
                    <span className="absolute left-0 top-1 w-4 text-center text-[6px] leading-[10px] font-bold font-['Liberation_Sans',sans-serif]">DWG</span>
                  </span>
                  <span className="ml-0.5 flex-1 font-bold font-['Liberation_Mono',monospace]">Drawing1.dwg</span>
                  <button aria-label="关闭图形"><X size={13} strokeWidth={4} /></button>
                </div>
                <button aria-label="新建" className="w-7 pr-0.5 flex items-center justify-center bg-[#3f4650]">
                  <Icon>{icons.newTab}</Icon>
                </button>
              </div>
              <Canvas />
              <LayoutTabs />
            </main>
            <div className="w-[62px] shrink-0 pl-0.5 pt-px flex items-start">
              <div>
                <ToolColumn tools={modifyTools} />
                <ToolColumn tools={orderTools} />
              </div>
              <ToolColumn tools={mechTools} />
            </div>
          </div>
          <div className="h-[57px] mt-[5px] mr-[5px] shrink-0 flex justify-between bg-[#2b2d31] overflow-hidden">
            <div className="pt-0.5 -ml-2 text-base leading-[18px] text-[#aeb9c6]">
              <p>命令:</p>
              <p>命令:</p>
              <p>命令:</p>
            </div>
            <div className="w-3.5 mr-px flex flex-col justify-between bg-[#3a3f47]">
              <svg width="14" height="20" viewBox="0 0 14 20" fill="none"><path d="M4 12.500L7 9.500l3 3" stroke="#818994" strokeWidth="1.500" /></svg>
              <div className="h-[15px] bg-[#535e69]"></div>
            </div>
          </div>
        </div>
        <Properties />
      </div>
    </div>
  )
}

export default App
